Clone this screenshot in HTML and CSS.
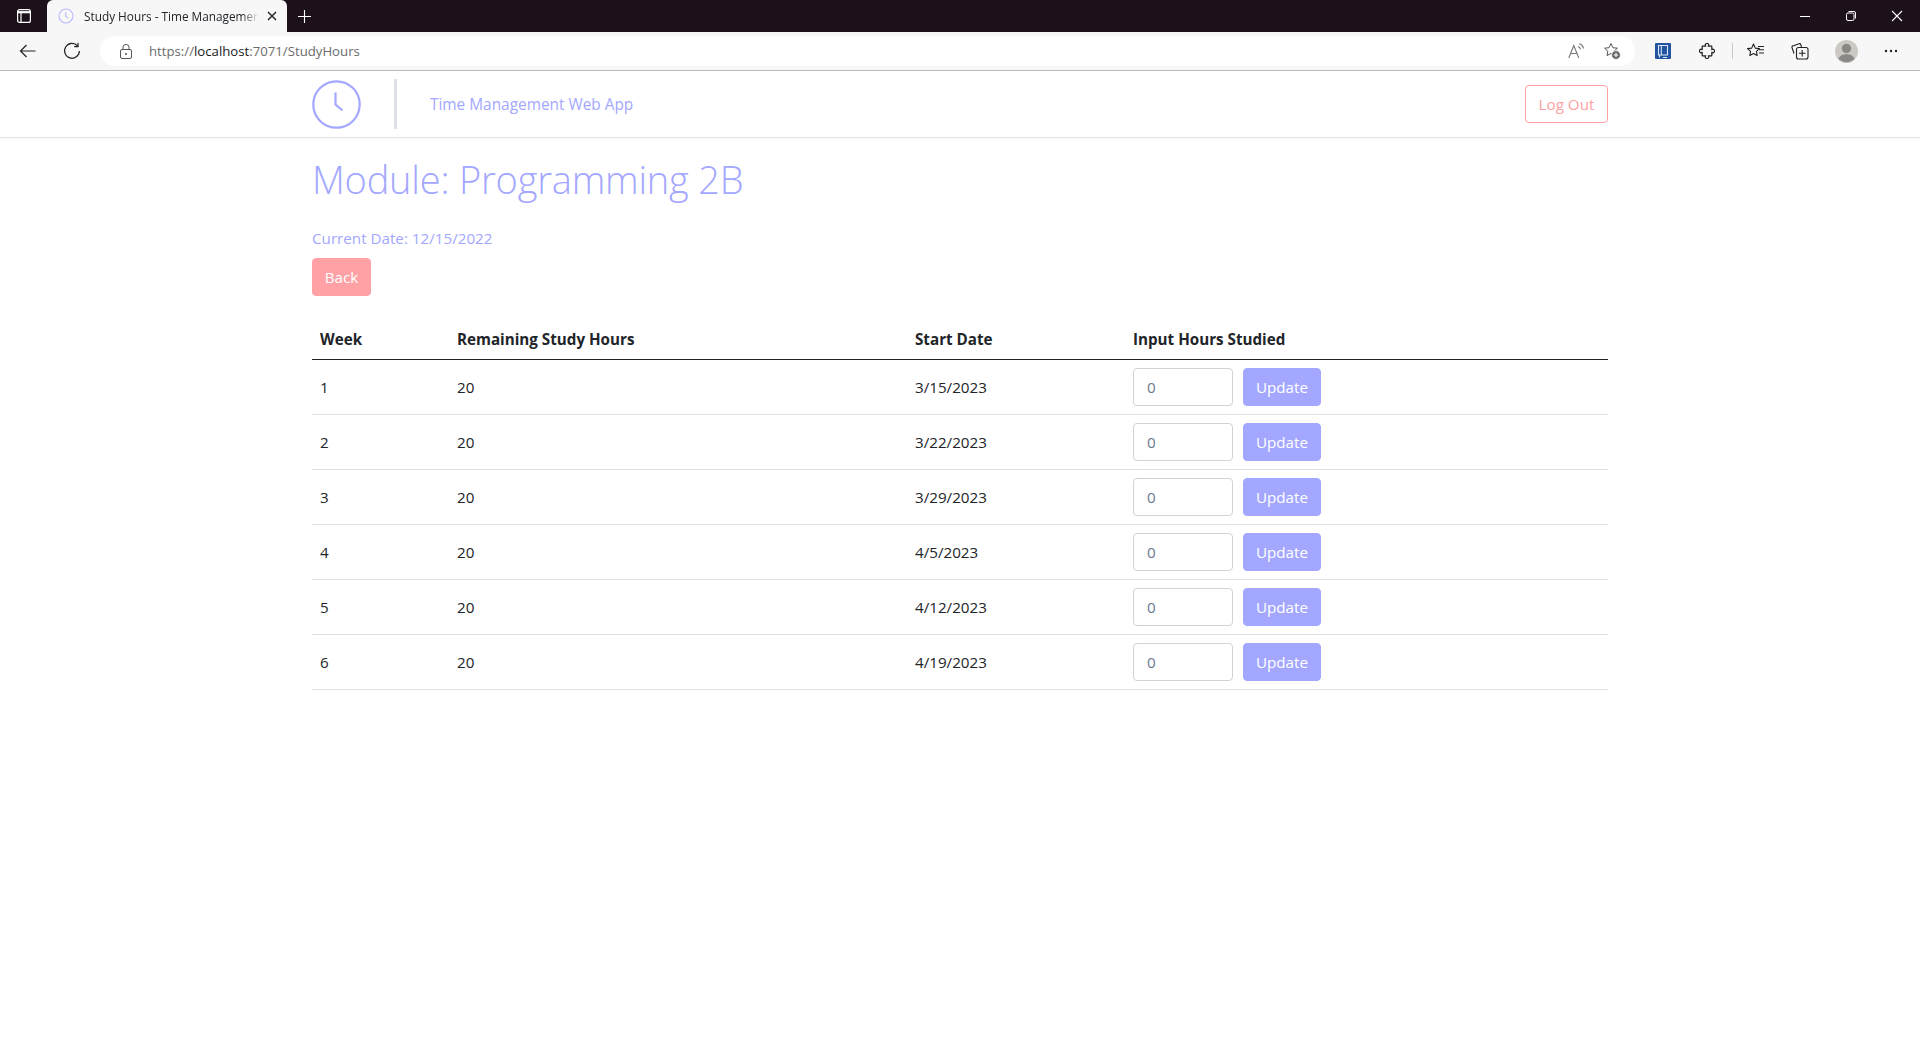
FILE: index.html
```html
<!DOCTYPE html>
<html>
<head>
    <title>Study Hours - Time Management Web App</title>
    <link rel="stylesheet" href="styles.css">
</head>
<body>
    <div class="tabstrip">
        <div class="tab-actions">
            <svg width="16" height="16" viewBox="0 0 16 16" fill="none" stroke="#fff" stroke-width="1.2"><rect x="1.6" y="1.600" width="12.800" height="12.800" rx="2"/><path d="M1.600 4.200h12.800" stroke-width="2.200"/><path d="M5 4v10"/></svg>
        </div>
        <div class="tab">
            <svg class="tab-icon" width="16" height="16" viewBox="0 0 16 16" fill="none" stroke="#b6b9ff" stroke-width="1.100"><circle cx="8" cy="8" r="7"/><path d="M7.800 4.200v4l2 2"/></svg>
            <span class="tab-title">Study Hours - Time Management Web App</span>
            <svg class="tab-close" width="10" height="10" viewBox="0 0 10 10" stroke="#222" stroke-width="1.400"><path d="M1 1l8 8M9 1l-8 8"/></svg>
        </div>
        <svg class="new-tab" width="15" height="15" viewBox="0 0 15 15" stroke="#fff" stroke-width="1.100"><path d="M7.500 1v13M1 7.500h13"/></svg>
        <div class="window-controls">
            <svg width="12" height="12" viewBox="0 0 12 12" stroke="#fff" stroke-width="1"><path d="M1 6.500h10"/></svg>
            <svg width="12" height="12" viewBox="0 0 12 12" fill="none" stroke="#fff" stroke-width="1"><rect x="1.500" y="3" width="7.500" height="7.500" rx="1.500"/><path d="M3.500 1.500h5.500a1.500 1.500 0 0 1 1.500 1.500v5.500"/></svg>
            <svg width="12" height="12" viewBox="0 0 12 12" stroke="#fff" stroke-width="1.100"><path d="M1 1l10 10M11 1l-10 10"/></svg>
        </div>
    </div>

    <div class="toolbar">
        <svg class="tool-back" width="17" height="16" viewBox="0 0 17 16" fill="none" stroke="#222" stroke-width="1.200"><path d="M16.500 8H1.500M7.500 2 1.500 8l6 6"/></svg>
        <svg class="tool-reload" width="18" height="18" viewBox="0 0 18 18" fill="none" stroke="#222" stroke-width="1.200"><path d="M14.600 4A7.400 7.400 0 1 0 16.400 9"/><path d="M15 .8v3.800h-3.800"/></svg>
        <div class="address">
            <svg class="lock" width="12" height="15" viewBox="0 0 12 15" fill="none" stroke="#555" stroke-width="1"><rect x=".5" y="5.500" width="11" height="9" rx="1.500"/><path d="M3 5.500V3a3 2.500 0 0 1 6 0v2.500"/><circle cx="6" cy="10" r="1" fill="#555" stroke="none"/></svg>
            <span class="url">https://<b>localhost</b>:7071/StudyHours</span>
            <svg class="addr-read" width="17" height="16" viewBox="0 0 17 16" fill="none" stroke="#777" stroke-width="1.100"><path d="M.8 15 5.800 2.500l5 12.500M2.600 10.500h6.400"/><path d="M10 3.500c1.500.5 2.300 1.500 2.600 3M11.300 .8c2.500.8 3.700 2.400 4.200 4.700"/></svg>
            <svg class="addr-star" width="18" height="18" viewBox="0 0 18 18" fill="none" stroke="#555" stroke-width="1"><path d="M8 1.500 9.900 5.700l4.500.5-3.300 3 .9 4.400L8 11.400l-4 2.200.9-4.400-3.300-3 4.500-.5z"/><circle cx="13" cy="13" r="4.400" fill="#666" stroke="#fff" stroke-width=".8"/><path d="M13 10.800v4.400M10.800 13h4.400" stroke="#fff" stroke-width="1.100"/></svg>
        </div>
        <div class="tools">
            <svg class="tool-book" width="16" height="16" viewBox="0 0 16 16"><rect width="16" height="16" rx="1" fill="#23549f"/><path d="M3.500 2.500h9v9.500h-9zM6.300 2.500V12M4.500 14.500V12M8 14.500h4" fill="none" stroke="#dbe7f8" stroke-width="1.100"/></svg>
            <svg width="16" height="16" viewBox="0 0 16 16" fill="none" stroke="#222" stroke-width="1.200" stroke-linejoin="round"><path d="M6.700 3.200a1.700 1.700 0 1 1 2.600 0h3.500v3.500a1.700 1.700 0 1 1 0 2.600v3.500H9.300a1.700 1.700 0 1 1-2.600 0H3.200V9.300a1.700 1.700 0 1 1 0-2.600V3.200z"/></svg>
            <span class="tool-sep"></span>
            <svg width="18" height="16" viewBox="0 0 18 16" fill="none" stroke="#222" stroke-width="1.100"><path d="M6.500 1 8.300 5.100l4.200.5-3.100 2.800.8 4.200-3.700-2.100-3.700 2.100.8-4.200L.5 5.600l4.200-.5z" stroke-linejoin="round"/><path d="M11 3.500h6M12 6.800h5M12 10h5"/></svg>
            <svg width="18" height="18" viewBox="0 0 18 18" fill="none" stroke="#222" stroke-width="1.100"><path d="M3 11.500 1 5.500c-.2-.7.100-1.400.8-1.600L8 1.700c.8-.2 1.400.1 1.700.8L10.500 5"/><rect x="5.500" y="5.500" width="11.500" height="11.500" rx="2"/><path d="M11.200 8v6.500M8 11.200h6.500"/></svg>
            <svg width="23" height="23" viewBox="0 0 23 23"><circle cx="11.500" cy="11.500" r="11.500" fill="#ccc9c5"/><circle cx="11.500" cy="8.500" r="4.700" fill="#8a8784"/><path d="M3.600 19c1-3.500 4-4.800 7.900-4.800s6.900 1.300 7.900 4.800a11.500 11.500 0 0 1-15.800 0z" fill="#8a8784"/></svg>
            <svg width="14" height="4" viewBox="0 0 14 4" fill="#222"><circle cx="2" cy="2" r="1.200"/><circle cx="7" cy="2" r="1.200"/><circle cx="12" cy="2" r="1.200"/></svg>
        </div>
    </div>

    <header class="navbar">
        <div class="container nav-row">
            <svg class="logo" width="49" height="49" viewBox="0 0 49 49" fill="none" stroke="#a3a7ff" stroke-width="2.200"><circle cx="24.500" cy="24.500" r="23.200"/><path d="M23.500 12.500v12l7 6"/></svg>
            <span class="nav-divider"></span>
            <span class="brand">Time Management Web App</span>
            <button class="btn-logout">Log Out</button>
        </div>
    </header>

    <main class="container">
        <h1>Module: Programming 2B</h1>
        <p class="current-date">Current Date: 12/15/2022</p>
        <button class="btn-back">Back</button>

        <table>
            <colgroup>
                <col class="col-week">
                <col class="col-hours">
                <col class="col-date">
                <col>
            </colgroup>
            <thead>
                <tr>
                    <th>Week</th>
                    <th>Remaining Study Hours</th>
                    <th>Start Date</th>
                    <th>Input Hours Studied</th>
                </tr>
            </thead>
            <tbody>
                <tr>
                    <td>1</td><td>20</td><td>3/15/2023</td>
                    <td><div class="hours-form"><input type="text" value="0"><button class="btn-update">Update</button></div></td>
                </tr>
                <tr>
                    <td>2</td><td>20</td><td>3/22/2023</td>
                    <td><div class="hours-form"><input type="text" value="0"><button class="btn-update">Update</button></div></td>
                </tr>
                <tr>
                    <td>3</td><td>20</td><td>3/29/2023</td>
                    <td><div class="hours-form"><input type="text" value="0"><button class="btn-update">Update</button></div></td>
                </tr>
                <tr>
                    <td>4</td><td>20</td><td>4/5/2023</td>
                    <td><div class="hours-form"><input type="text" value="0"><button class="btn-update">Update</button></div></td>
                </tr>
                <tr>
                    <td>5</td><td>20</td><td>4/12/2023</td>
                    <td><div class="hours-form"><input type="text" value="0"><button class="btn-update">Update</button></div></td>
                </tr>
                <tr>
                    <td>6</td><td>20</td><td>4/19/2023</td>
                    <td><div class="hours-form"><input type="text" value="0"><button class="btn-update">Update</button></div></td>
                </tr>
            </tbody>
        </table>
    </main>
</body>
</html>
```

FILE: styles.css
```css
* {
    box-sizing: border-box;
}

body {
    margin: 0;
    font-family: "Open Sans", "Noto Sans", Arial, sans-serif;
    font-size: 15.2px;
    color: #212529;
    background-color: #fff;
}

button, input {
    font-family: inherit;
    font-size: 15.2px;
}

/* browser window */
.tabstrip {
    display: flex;
    align-items: flex-end;
    height: 32px;
    background-color: #1c111b;
}

.tab-actions {
    display: flex;
    align-items: center;
    justify-content: center;
    width: 47px;
    height: 32px;
}

.tab {
    display: flex;
    align-items: center;
    width: 240px;
    height: 32px;
    padding: 0 10px 0 11px;
    background-color: #f7f7f7;
    border-radius: 6px 6px 0 0;
}

.tab-title {
    flex: 1;
    margin-left: 10px;
    font-size: 11.8px;
    white-space: nowrap;
    overflow: hidden;
    -webkit-mask-image: linear-gradient(to right, #000 90%, transparent);
    mask-image: linear-gradient(to right, #000 90%, transparent);
}

.tab-close {
    margin-left: 8px;
}

.new-tab {
    align-self: center;
    margin-left: 10px;
}

.window-controls {
    display: flex;
    align-items: center;
    gap: 34px;
    height: 32px;
    margin-left: auto;
    padding-right: 17px;
}

.toolbar {
    display: flex;
    align-items: center;
    height: 39px;
    padding-left: 19px;
    background-color: #f7f7f7;
    border-bottom: 1px solid #bdbdbd;
}

.tool-reload {
    margin-left: 27px;
}

.address {
    display: flex;
    align-items: center;
    width: 1535px;
    height: 30px;
    margin-left: 19px;
    padding: 0 14px 0 20px;
    background-color: #fff;
    border-radius: 15px;
}

.url {
    margin-left: 17px;
    font-size: 13.2px;
    color: #6b6b6b;
}

.url b {
    font-weight: 400;
    color: #1a1a1a;
}

.addr-read {
    margin-left: auto;
}

.addr-star {
    margin-left: 18px;
}

.tools {
    display: flex;
    align-items: center;
    gap: 26px;
    margin-left: 20px;
}

.tool-book {
    margin-right: 2px;
}

.tool-sep {
    width: 1px;
    height: 16px;
    margin: 0 -12px 0 -9px;
    background-color: #c8c8c8;
}

/* page */
.container {
    width: 1296px;
    margin: 0 auto;
}

.navbar {
    height: 67px;
    border-bottom: 1px solid #e4e4e4;
    box-shadow: 0 1px 3px rgba(0, 0, 0, 0.04);
}

.nav-row {
    display: flex;
    align-items: center;
    height: 66px;
}

.logo {
    flex: none;
}

.nav-divider {
    width: 3px;
    height: 50px;
    margin-left: 33px;
    background-color: #dee2e6;
}

.brand {
    margin-left: 33px;
    font-size: 15.4px;
    color: #a3a7ff;
}

.btn-logout {
    width: 83px;
    height: 38px;
    margin-left: auto;
    padding: 0;
    color: #ffa1a5;
    background-color: #fff;
    border: 1px solid #ffa1a5;
    border-radius: 4px;
}

h1 {
    margin: 17px 0 23px;
    font-size: 38px;
    font-weight: 300;
    letter-spacing: -0.2px;
    line-height: 48px;
    color: #a3a7ff;
}

.current-date {
    margin: 0 0 8px;
    line-height: 24px;
    color: #a3a7ff;
}

.btn-back {
    display: block;
    width: 59px;
    height: 38px;
    padding: 0;
    color: #fff;
    background-color: #ffa1a5;
    border: 1px solid #ffa1a5;
    border-radius: 4px;
}

table {
    width: 100%;
    margin-top: 24px;
    table-layout: fixed;
    border-collapse: collapse;
}

.col-week {
    width: 137px;
}

.col-hours {
    width: 458px;
}

.col-date {
    width: 218px;
}

th {
    height: 39px;
    padding: 8px;
    text-align: left;
    font-weight: 700;
    border-bottom: 1px solid #212529;
}

td {
    height: 55px;
    padding: 7px 8px;
    border-bottom: 1px solid #dee2e6;
}

.hours-form {
    display: flex;
    gap: 10px;
}

.hours-form input {
    width: 100px;
    height: 38px;
    padding: 0 13px;
    color: #6a7a90;
    border: 1px solid #ced4da;
    border-radius: 4px;
    outline: none;
}

.btn-update {
    width: 78px;
    height: 38px;
    padding: 0;
    color: #fff;
    background-color: #a3a7ff;
    border: 1px solid #a3a7ff;
    border-radius: 4px;
}
```
